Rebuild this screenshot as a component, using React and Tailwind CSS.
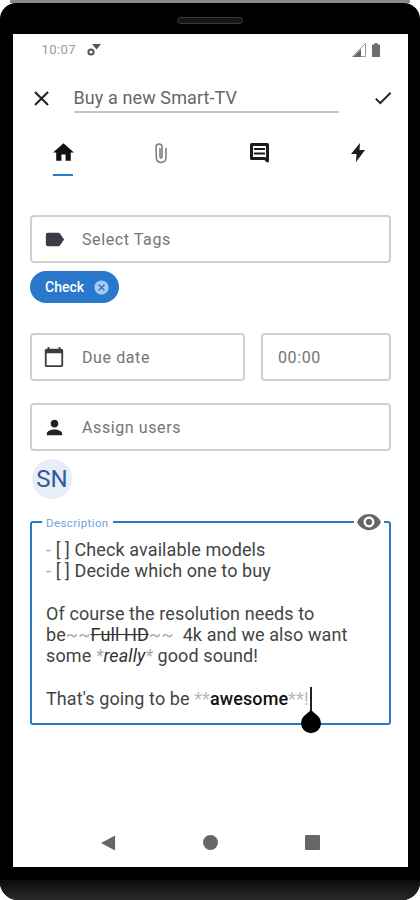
import { MdHome, MdLabel, MdCalendarToday, MdPerson, MdVisibility, MdClose, MdCheck, MdCancel } from "react-icons/md";

function Field({ icon, label, className = "" }) {
  return (
    <div className={`flex h-[48px] items-center rounded border-2 border-[#d0d0d0] pl-[11px] ${className}`}>
      <span className="flex w-[39px] text-[#3c3c44]">{icon}</span>
      <span className="pt-[1px] text-[16px] tracking-[0.6px] text-[#757575]">{label}</span>
    </div>
  );
}

export default function App() {
  return (
    <div className="relative h-[900px] w-[420px] overflow-hidden bg-white font-['Roboto',sans-serif]">
      <div className="mx-[10px] h-[3px] bg-[#8a8a8a]" />
      <div className="flex h-[897px] flex-col rounded-t-[16px] rounded-b-[18px] bg-black">
        <div className="flex h-[31px] shrink-0 justify-center pt-[14px]">
          <div className="h-[7px] w-[66px] rounded-full border border-[#3a3a3a] bg-[#161616]" />
        </div>
        <div className="mx-[12.5px] flex h-[833px] shrink-0 flex-col bg-white">
          {/* status bar */}
          <div className="flex h-[32px] shrink-0 items-center justify-between pl-[29px] pr-[28px] text-[#9a9a9a]">
            <div className="flex items-center gap-[11px]">
              <span className="text-[13px] tracking-[0.4px]">10:07</span>
              <svg viewBox="0 0 14 12" className="h-[12px] w-[14px]">
                <circle cx="4" cy="8" r="2.6" fill="none" stroke="#555" strokeWidth="2" />
                <path d="M5 0h9l-4.5 5.5z" fill="#555" />
              </svg>
            </div>
            <div className="flex items-center gap-[6px]">
              <svg viewBox="0 0 14 14" className="h-[14px] w-[14px]">
                <path d="M0.5 13.5 13.5 0.5v13z" fill="#fff" stroke="#999" />
                <path d="M1 14 9 6v8z" fill="#666" />
              </svg>
              <svg viewBox="0 0 8 14" className="h-[14px] w-[8px]">
                <path d="M2.5 0h3v1.5H8V14H0V1.5h2.5z" fill="#6e6e6e" />
              </svg>
            </div>
          </div>
          {/* title row */}
          <div className="mt-[16px] flex h-[32px] shrink-0 items-center pl-[16px] pr-[14px]">
            <MdClose className="h-[25px] w-[25px] text-[#222]" />
            <div className="ml-[20px] flex h-[29px] w-[265px] items-center border-b-2 border-[#c4c4c4] text-[18px] tracking-[0.1px] text-[#666]">
              Buy a new Smart-TV
            </div>
            <MdCheck className="ml-auto h-[22px] w-[22px] text-[#222]" />
          </div>
          {/* tabs */}
          <div className="mt-[26px] flex shrink-0 justify-between pl-[37.5px] pr-[36.5px]">
            <div className="flex w-[26px] flex-col items-center">
              <MdHome className="h-[25px] w-[25px] text-[#111]" />
              <div className="mt-[9px] h-[2px] w-[20px] bg-[#2a78cc]" />
            </div>
            <div className="flex w-[26px] justify-center pt-[2px]">
              <svg viewBox="0 0 14 22" className="h-[22px] w-[14px]" fill="none" stroke="#777" strokeWidth="1.5">
                <path d="M12 6v10a5 5 0 0 1-9.5 1.5L2 5a3 3 0 0 1 6 0v10a1 1 0 0 1-2 0V6" />
              </svg>
            </div>
            <div className="flex w-[26px] justify-center pt-[3px]">
              <svg viewBox="0 0 21 20" className="h-[20px] w-[21px]">
                <path d="M2.5 1.5h16v16.5l-2.5-2.5h-13.5z" fill="#fff" stroke="#1c1c1c" strokeWidth="3" strokeLinejoin="round" />
                <path d="M5 6h11M5 10.5h11" stroke="#1c1c1c" strokeWidth="2" />
              </svg>
            </div>
            <div className="flex w-[26px] justify-center pt-[3px]">
              <svg viewBox="0 0 14 19" className="h-[19px] w-[14px]">
                <path d="M9 0 0 11h5.5L5 19l9-12H8.5z" fill="#1c1c1c" />
              </svg>
            </div>
          </div>
          {/* form */}
          <div className="mt-[39px] flex flex-col pl-[17.5px] pr-[16.5px]">
            <Field icon={<MdLabel className="h-[23px] w-[23px]" />} label="Select Tags" />
            <div className="mt-[8px] flex h-[32px] w-[89px] items-center rounded-full bg-[#2a78cc] pl-[15px]">
              <span className="text-[14px] font-medium text-white">Check</span>
              <MdCancel className="ml-[9px] h-[17px] w-[17px] text-[#a9cbf0]" />
            </div>
            <div className="mt-[30px] flex gap-[16px]">
              <Field className="w-[215px]" icon={<MdCalendarToday className="h-[22px] w-[22px]" />} label="Due date" />
              <div className="flex h-[48px] flex-1 items-center rounded border-2 border-[#d0d0d0] pl-[15px] pt-[1px] text-[16px] tracking-[0.6px] text-[#757575]">
                00:00
              </div>
            </div>
            <Field className="mt-[22px]" icon={<MdPerson className="h-[23px] w-[23px] text-[#222]" />} label="Assign users" />
            <div className="ml-[2px] mt-[8px] flex h-[40px] w-[40px] items-center justify-center rounded-full bg-[#e9edf7] text-[24px] text-[#2f5aa0]">
              SN
            </div>
            {/* description */}
            <div className="relative mt-[22px] h-[204px] rounded-[3px] border-2 border-[#2a78cc] pl-[14px] pt-[16px] text-[18px] leading-[21.3px] tracking-[0.1px] text-[#444]">
              <span className="absolute -top-[6px] left-[10px] bg-white px-[4px] text-[11.5px] leading-[12px] tracking-[0.4px] text-[#6ba3dc]">
                Description
              </span>
              <span className="absolute -top-[14px] right-[5px] flex bg-white px-[2px]">
                <MdVisibility className="h-[26px] w-[26px] text-[#666]" />
              </span>
              <p>
                <span className="text-[#aaa]">-</span> [ ] Check available models
              </p>
              <p>
                <span className="text-[#aaa]">-</span> [ ] Decide which one to buy
              </p>
              <p className="mt-[21.3px]">Of course the resolution needs to</p>
              <p>
                be<span className="text-[#aaa]">~~</span>
                <span className="text-[#333] line-through">Full HD</span>
                <span className="text-[#aaa]">~~</span>&nbsp; 4k and we also want
              </p>
              <p>
                some <span className="italic text-[#aaa]">*<span className="text-[#333]">really</span>*</span> good sound!
              </p>
              <p className="relative mt-[21.3px]">
                That's going to be <span className="text-[#bbb]">**</span>
                <span className="font-medium text-[#111]">awesome</span>
                <span className="text-[#bbb]">**!</span>
              </p>
              {/* text cursor + handle */}
              <svg viewBox="0 0 20 47" className="absolute left-[269px] top-[164px] h-[47px] w-[20px]">
                <path d="M10 0v24" stroke="#222" strokeWidth="2" />
                <path d="M10 23 L17 29 A10 10 0 1 1 3 29z" fill="#000" />
              </svg>
            </div>
          </div>
          {/* nav buttons */}
          <div className="mt-auto flex h-[32px] shrink-0 items-start justify-between pl-[88px] pr-[88px]">
            <svg viewBox="0 0 16 16" className="h-[16px] w-[15px]">
              <path d="M15 0v16L0 8z" fill="#666" />
            </svg>
            <div className="h-[15px] w-[15px] rounded-full bg-[#666]" />
            <div className="h-[15px] w-[15px] rounded-[1px] bg-[#666]" />
          </div>
        </div>
        <div className="mt-auto h-[20px] rounded-b-[18px] bg-gradient-to-b from-[#0c0c0c] to-[#2a2a2a]" />
      </div>
    </div>
  );
}
